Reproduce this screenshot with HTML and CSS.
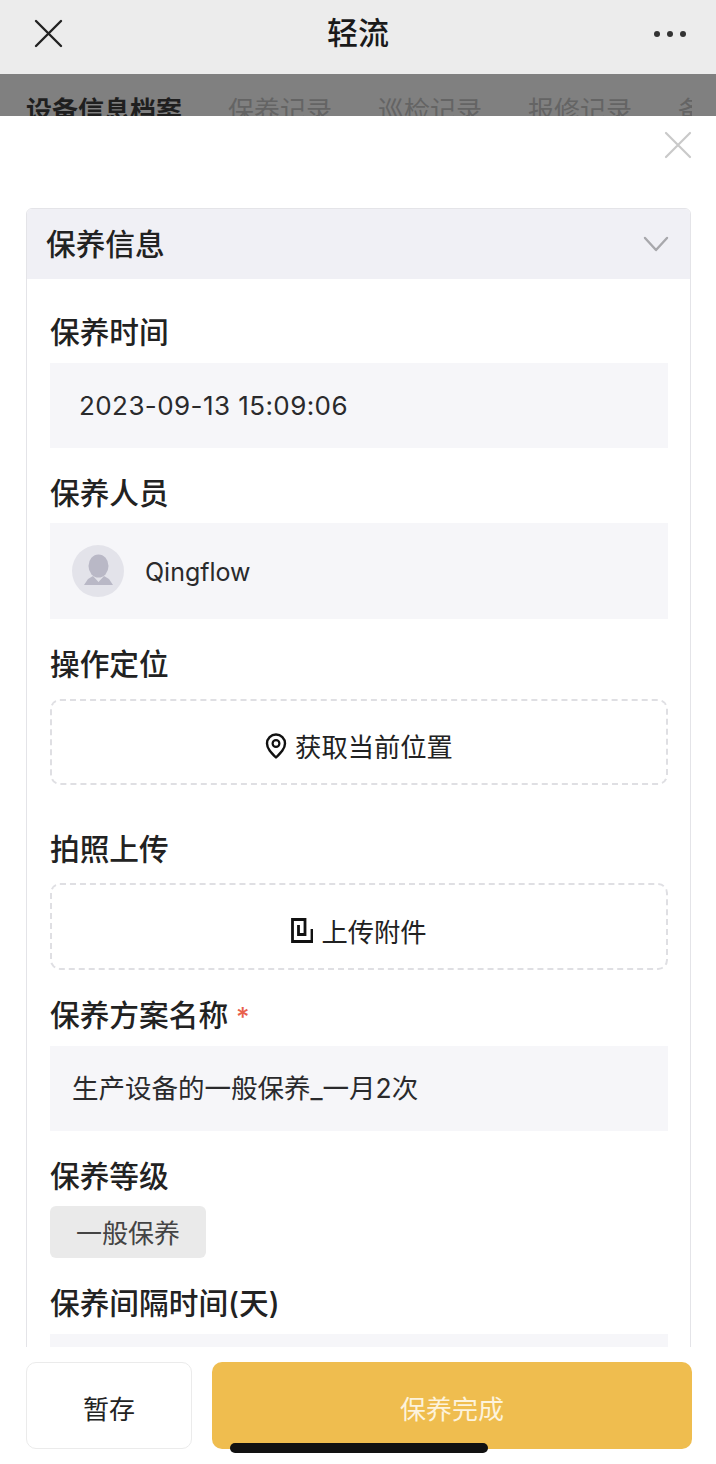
FILE: index.html
```html
<!DOCTYPE html>
<html lang="zh-CN">
<head>
<meta charset="utf-8">
<title>轻流</title>
<link rel="stylesheet" href="styles.css">
</head>
<body>
<div class="app">
  <header class="topbar">
    <svg class="top-close" width="30" height="30" viewBox="0 0 30 30"><path d="M3 3 L28 28 M28 3 L3 28" fill="none" stroke="#222" stroke-width="2.4" stroke-linecap="round"/></svg>
    <h1 class="title">轻流</h1>
    <svg class="top-more" width="34" height="8" viewBox="0 0 34 8"><circle cx="4" cy="4" r="3" fill="#333"/><circle cx="17" cy="4" r="3" fill="#333"/><circle cx="30" cy="4" r="3" fill="#333"/></svg>
  </header>
  <nav class="tabs">
    <div class="tabs-inner">
      <span class="tab tab-active">设备信息档案</span>
      <span class="tab">保养记录</span>
      <span class="tab">巡检记录</span>
      <span class="tab">报修记录</span>
      <span class="tab">备件记录</span>
    </div>
  </nav>
  <main class="sheet">
    <div class="sheet-close">
      <svg width="28" height="28" viewBox="0 0 28 28"><path d="M2 2 L26 26 M26 2 L2 26" fill="none" stroke="#c9c9c9" stroke-width="2.2" stroke-linecap="round"/></svg>
    </div>
    <div class="scroll">
      <section class="card">
        <div class="card-head">
          <span class="card-title">保养信息</span>
          <svg width="26" height="16" viewBox="0 0 26 16"><path d="M2 2 L13 14 L24 2" fill="none" stroke="#a8a8ac" stroke-width="2.4" stroke-linecap="round" stroke-linejoin="round"/></svg>
        </div>
        <div class="card-body">
          <div class="label g0">保养时间</div>
          <div class="box box-time">2023-09-13 15:09:06</div>

          <div class="label g1">保养人员</div>
          <div class="box box-user">
            <span class="avatar">
              <svg width="52" height="52" viewBox="0 0 52 52"><circle cx="26" cy="26" r="26" fill="#e3e3ea"/><ellipse cx="26.5" cy="21" rx="10" ry="11.500" fill="#b9b8c6"/><path d="M21 31 L26.500 37 L32 31 L37 34 L41 40 H12 L16 34 Z" fill="#b9b8c6"/></svg>
            </span>
            <span class="user-name">Qingflow</span>
          </div>

          <div class="label g1">操作定位</div>
          <div class="dash d1">
            <svg width="22" height="26" viewBox="0 0 22 26"><path d="M11 24.500 C6 19.500 2 15.500 2 10.500 A9 9 0 0 1 20 10.500 C20 15.500 16 19.500 11 24.500 Z" fill="none" stroke="#111" stroke-width="2.400" stroke-linejoin="round"/><circle cx="11" cy="10.500" r="3.400" fill="none" stroke="#111" stroke-width="2.200"/></svg>
            <span>获取当前位置</span>
          </div>

          <div class="label g2">拍照上传</div>
          <div class="dash d2">
            <svg width="22" height="25" viewBox="0 0 22 25"><path d="M21 11 V23.500 H1.500 V1.500 H14 V16.500 H7.500 V7" fill="none" stroke="#111" stroke-width="2.800"/></svg>
            <span>上传附件</span>
          </div>

          <div class="label g1">保养方案名称 <span class="req">*</span></div>
          <div class="box box-text">生产设备的一般保养_一月2次</div>

          <div class="label g1">保养等级</div>
          <div class="tag">一般保养</div>

          <div class="label g1">保养间隔时间(天)</div>
          <div class="box box-text"></div>
        </div>
      </section>
    </div>
    <footer class="actions">
      <button class="btn btn-save">暂存</button>
      <button class="btn btn-done">保养完成</button>
    </footer>
    <div class="home-bar"></div>
  </main>
</div>
</body>
</html>
```
FILE: styles.css
```css
* { box-sizing: border-box; }
html, body { margin: 0; padding: 0; }
body {
  width: 716px;
  height: 1464px;
  overflow: hidden;
  background: #fff;
  color: #1c1c1e;
  font-family: "Inter", "Noto Sans CJK SC", sans-serif;
}
.app { height: 1464px; display: flex; flex-direction: column; }
.topbar {
  height: 74px;
  flex: none;
  background: #ececec;
  display: flex;
  align-items: center;
  justify-content: space-between;
  padding: 0 29px 0 33px;
  position: relative;
}
.title {
  position: absolute;
  left: 0;
  right: 0;
  top: 11px;
  margin: 0;
  text-align: center;
  font-size: 31px;
  line-height: 44px;
  font-weight: 500;
  color: #1a1a1a;
}
.top-close { margin-top: -8px; }
.top-more { margin-top: -6px; }
.tabs {
  height: 42px;
  flex: none;
  overflow: hidden;
  background: #808080;
  padding: 19px 24px 0 26px;
}
.tabs-inner {
  display: flex;
  gap: 46px;
  overflow: hidden;
  white-space: nowrap;
  font-size: 26px;
  line-height: 36px;
  color: #646464;
}
.tab { flex: none; }
.tab-active { color: #1f1f1f; font-weight: 700; }
.sheet {
  flex: 1;
  min-height: 0;
  background: #fff;
  display: flex;
  flex-direction: column;
  position: relative;
}
.sheet-close {
  height: 92px;
  flex: none;
  display: flex;
  justify-content: flex-end;
  padding: 15px 24px 0 0;
}
.scroll { flex: 1; min-height: 0; overflow: hidden; padding: 0 25px 0 26px; }
.card {
  border: 1px solid #e4e4e8;
  border-radius: 6px 6px 0 0;
  overflow: hidden;
}
.card-head {
  height: 70px;
  background: #f0f0f5;
  display: flex;
  align-items: center;
  justify-content: space-between;
  padding: 0 21px 0 19px;
}
.card-title { font-size: 29.7px; line-height: 40px; font-weight: 500; color: #222; }
.card-body { padding: 0 22px 0 23px; }
.label { font-size: 29.7px; line-height: 40px; font-weight: 500; color: #222; }
.g0 { margin-top: 33px; }
.g1 { margin-top: 25px; }
.g2 { margin-top: 44px; }
.req { color: #e8604c; font-size: 26px; line-height: 0; }
.box {
  background: #f6f6f9;
  margin-top: 11px;
  display: flex;
  align-items: center;
  font-size: 26.5px;
  color: #2a2a2c;
}
.box-time { height: 85px; padding-left: 29px; font-size: 26px; letter-spacing: 0.42px; }
.box-user { height: 96px; padding-left: 22px; gap: 21px; margin-top: 10px; }
.user-name { font-size: 25px; padding-top: 2px; }
.box-text { height: 85px; padding-left: 22px; padding-bottom: 4px; }
.avatar { display: flex; width: 52px; height: 52px; }
.dash {
  height: 86px;
  border: 2px dashed #dfdfe3;
  border-radius: 10px;
  display: flex;
  align-items: center;
  justify-content: center;
  gap: 8px;
  font-size: 26.3px;
  color: #222;
  margin-top: 15px;
  padding-top: 7px;
}
.d2 { margin-top: 14px; height: 87px; padding-top: 8px; }
.tag {
  width: 156px;
  height: 52px;
  margin-top: 10px;
  border-radius: 6px;
  background: #eaeaea;
  color: #444;
  font-size: 26px;
  display: flex;
  align-items: center;
  justify-content: center;
  padding-bottom: 2px;
}
.actions {
  height: 117px;
  flex: none;
  background: #fff;
  display: flex;
  gap: 20px;
  padding: 15px 24px 15px 26px;
}
.btn {
  height: 87px;
  border-radius: 10px;
  font-family: inherit;
  font-size: 26px;
  padding: 4px 0 0;
}
.btn-save { width: 166px; background: #fff; border: 1px solid #ebebeb; color: #222; }
.btn-done { flex: 1; background: #efbd4f; border: 0; color: #fdf3dc; }
.home-bar {
  position: absolute;
  left: 230px;
  bottom: 11px;
  width: 258px;
  height: 10px;
  border-radius: 5px;
  background: #111;
}
```
